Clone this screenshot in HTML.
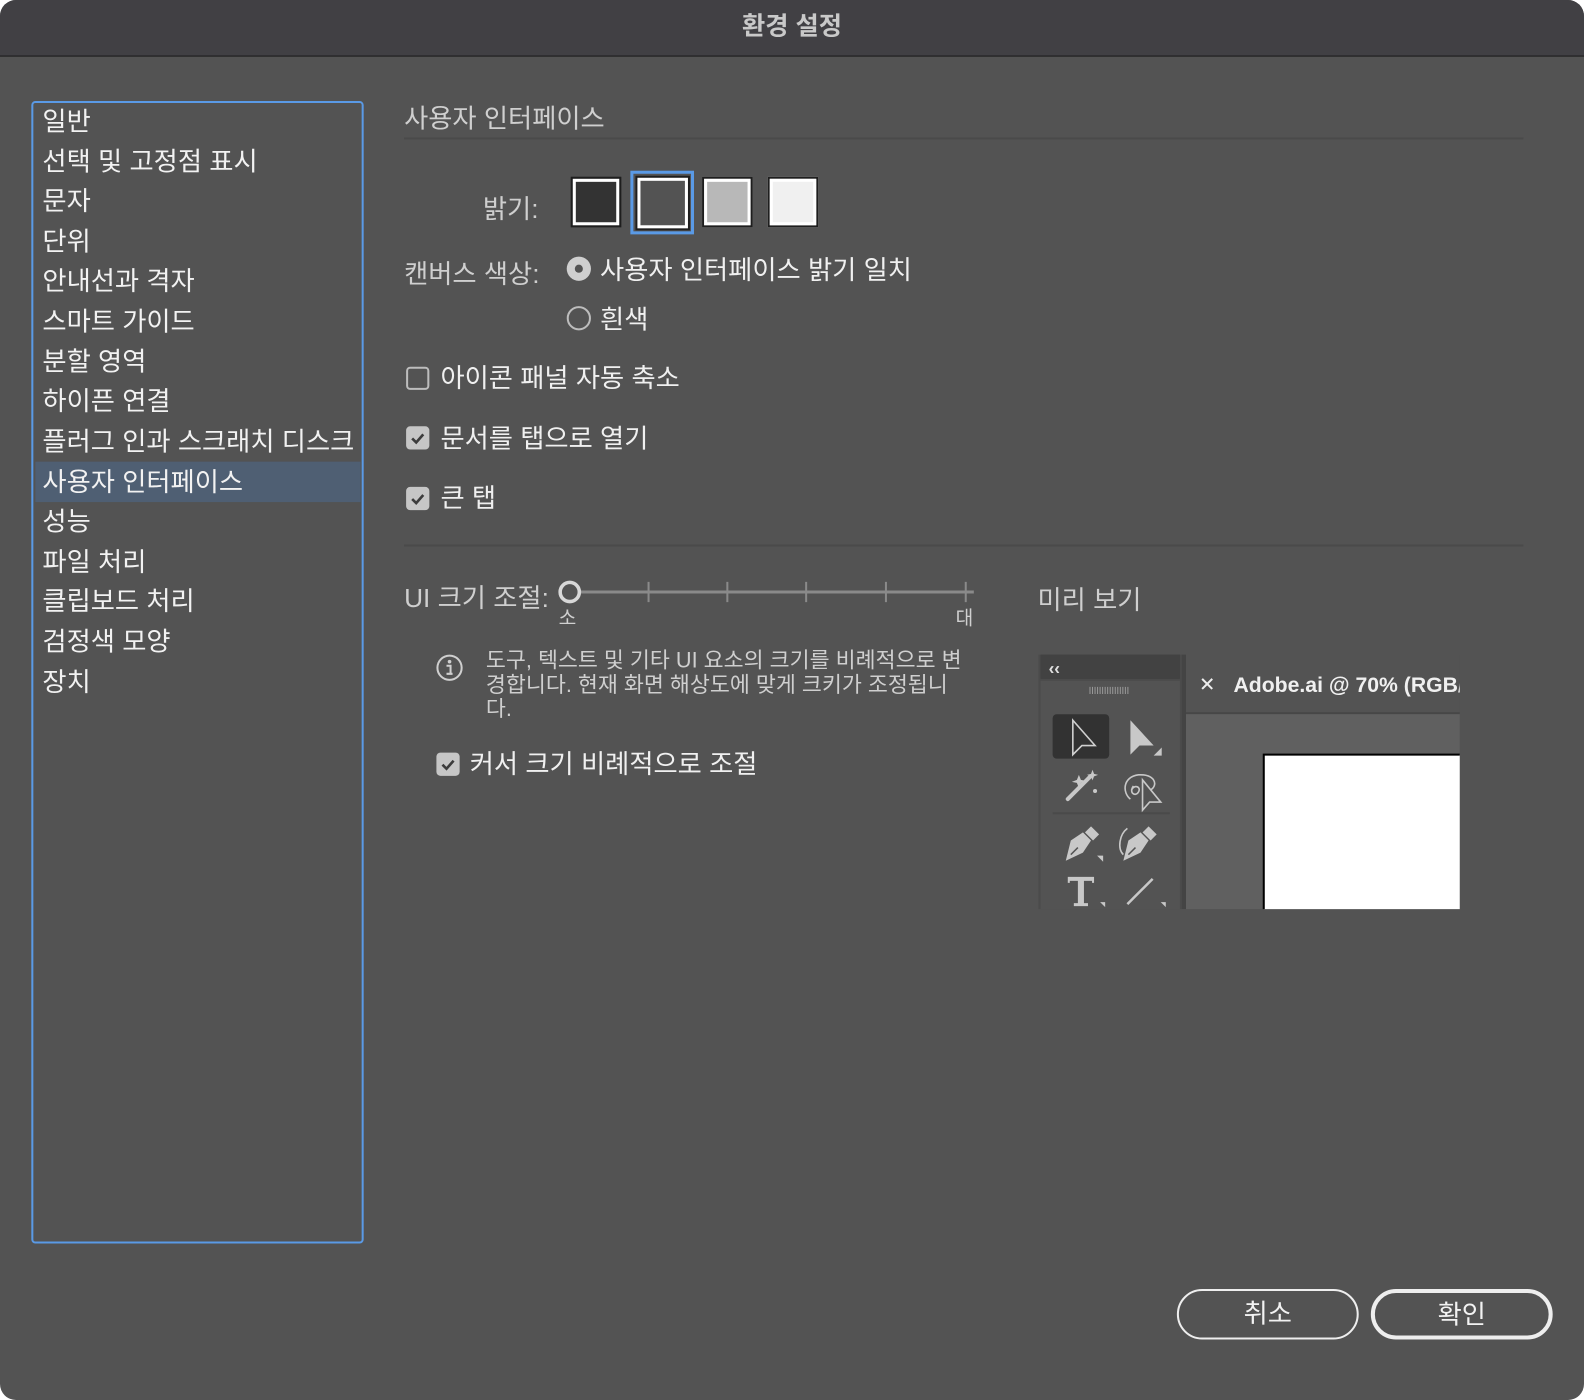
<!DOCTYPE html>
<html><head><meta charset="utf-8">
<style>
*{margin:0;padding:0;box-sizing:border-box}
body{width:1584px;height:1400px;background:#fff;position:relative;overflow:hidden;font-family:"Liberation Sans","Noto Sans CJK KR",sans-serif}
#win{position:absolute;left:0;top:0;width:1584px;height:1400px;background:#535353;border-radius:16px;overflow:hidden}
#c{position:absolute;left:0;top:0;width:1568px;height:1386px;transform:scale(1.0102);transform-origin:0 0}
#title{position:absolute;left:0;top:0;width:1568px;height:56px;background:#414044;border-bottom:1px solid #1a1a1a;text-align:center;color:#c9c9c9;font-size:25px;font-weight:bold;line-height:52px}
.a{position:absolute;white-space:nowrap}
#side{position:absolute;left:31px;top:100px;width:329px;height:1131px;border:2px solid #5a9ae6;border-radius:4px}
.it{position:absolute;left:9px;color:#f2f2f2;font-size:26px;line-height:40px;height:40px;white-space:nowrap}
.sel{left:2px;width:322px;background:#4f5f73;padding-left:7px}
.lbl{color:#cfcfcf;font-size:26px}
.txt{color:#f0f0f0;font-size:26px}
.cb{position:absolute;width:23px;height:23px;border-radius:4px;background:#c6c6c6}
.cb.off{background:none;border:2px solid #bdbdbd}
.sw{position:absolute;top:175px;width:50px;height:50px;border:2px solid #1e1e1e}
.sw i{position:absolute;inset:0;border:3px solid #fff}
.btn{position:absolute;top:1276px;height:50px;border-radius:25px;border:2px solid #eee;color:#f2f2f2;font-size:26px;text-align:center;line-height:44px}
.hr{position:absolute;left:400px;width:1108px;height:2px;background:#4a4a4a}
</style></head><body>
<div id="win"><div id="c">
<div id="title">환경 설정</div>
<div id="side">
<div class="it" style="top:-2px">일반</div>
<div class="it" style="top:38px">선택 및 고정점 표시</div>
<div class="it" style="top:77px">문자</div>
<div class="it" style="top:117px">단위</div>
<div class="it" style="top:156px">안내선과 격자</div>
<div class="it" style="top:196px">스마트 가이드</div>
<div class="it" style="top:236px">분할 영역</div>
<div class="it" style="top:275px">하이픈 연결</div>
<div class="it" style="top:315px">플러그 인과 스크래치 디스크</div>
<div class="it sel" style="top:355px">사용자 인터페이스</div>
<div class="it" style="top:394px">성능</div>
<div class="it" style="top:434px">파일 처리</div>
<div class="it" style="top:473px">클립보드 처리</div>
<div class="it" style="top:513px">검정색 모양</div>
<div class="it" style="top:553px">장치</div>
</div>

<div class="a lbl" style="left:400px;top:97px">사용자 인터페이스</div>
<div class="hr" style="top:136px"></div>

<div class="a lbl" style="left:478px;top:187px">밝기:</div>
<div class="sw" style="left:565px;background:#333"><i></i></div>
<div style="position:absolute;left:624px;top:169px;width:63px;height:63px;border:3px solid #5a9ae6"></div>
<div class="sw" style="left:629px;top:174px;width:54px;height:54px;background:#535353"><i style="border-width:3px"></i></div>
<div class="sw" style="left:695px;background:#b8b8b8"><i></i></div>
<div class="sw" style="left:760px;background:#f0f0f0"><i></i></div>

<div class="a lbl" style="left:400px;top:251px">캔버스 색상:</div>
<div style="position:absolute;left:561px;top:254px;width:24px;height:24px;border-radius:50%;background:#cfcfcf"><div style="position:absolute;left:8px;top:8px;width:8px;height:8px;border-radius:50%;background:#535353"></div></div>
<div class="a txt" style="left:594px;top:247px">사용자 인터페이스 밝기 일치</div>
<div style="position:absolute;left:561px;top:303px;width:24px;height:24px;border-radius:50%;border:2px solid #bdbdbd"></div>
<div class="a txt" style="left:594px;top:296px">흰색</div>

<div class="cb off" style="left:402px;top:363px"></div>
<div class="a txt" style="left:436px;top:354px">아이콘 패널 자동 축소</div>
<div class="cb" style="left:402px;top:422px"><svg width="23" height="23"><path d="M6 12l4 4 7-8" stroke="#3c3c3c" stroke-width="2.6" fill="none"/></svg></div>
<div class="a txt" style="left:436px;top:414px">문서를 탭으로 열기</div>
<div class="cb" style="left:402px;top:482px"><svg width="23" height="23"><path d="M6 12l4 4 7-8" stroke="#3c3c3c" stroke-width="2.6" fill="none"/></svg></div>
<div class="a txt" style="left:436px;top:473px">큰 탭</div>

<div class="hr" style="top:539px"></div>

<div class="a lbl" style="left:400px;top:572px">UI 크기 조절:</div>
<svg class="a" style="left:550px;top:572px" width="420" height="30">
<line x1="22" y1="14" x2="414" y2="14" stroke="#8a8a8a" stroke-width="3"/>
<g stroke="#8a8a8a" stroke-width="2"><line x1="92" y1="4" x2="92" y2="24"/><line x1="170" y1="4" x2="170" y2="24"/><line x1="248" y1="4" x2="248" y2="24"/><line x1="327" y1="4" x2="327" y2="24"/><line x1="406" y1="4" x2="406" y2="24"/></g>
<circle cx="14" cy="14" r="9.5" fill="#535353" stroke="#d8d8d8" stroke-width="3.5"/>
</svg>
<div class="a" style="left:553px;top:597px;color:#d0d0d0;font-size:19px">소</div>
<div class="a" style="left:946px;top:597px;color:#d0d0d0;font-size:19px">대</div>
<div class="a lbl" style="left:1027px;top:574px">미리 보기</div>

<svg class="a" style="left:431px;top:646px" width="30" height="30"><circle cx="14" cy="15" r="12" fill="none" stroke="#cfcfcf" stroke-width="2"/><circle cx="14" cy="9" r="1.8" fill="#cfcfcf"/><path d="M11 13h4v8M11 21h6" stroke="#cfcfcf" stroke-width="2" fill="none"/></svg>
<div class="a" style="left:481px;top:642px;color:#cfcfcf;font-size:21.5px;line-height:24px">도구, 텍스트 및 기타 UI 요소의 크기를 비례적으로 변<br>경합니다. 현재 화면 해상도에 맞게 크키가 조정됩니<br>다.</div>

<div class="cb" style="left:432px;top:745px"><svg width="23" height="23"><path d="M6 12l4 4 7-8" stroke="#3c3c3c" stroke-width="2.6" fill="none"/></svg></div>
<div class="a txt" style="left:465px;top:736px">커서 크기 비례적으로 조절</div>

<svg class="a" style="left:1020px;top:640px" width="425" height="260">
<rect x="8" y="8" width="142" height="252" fill="#4b4b4b"/>
<rect x="10" y="8" width="138" height="24" fill="#424242"/>
<rect x="10" y="34" width="138" height="226" fill="#535353"/>
<text x="18" y="27" fill="#e0e0e0" font-size="17" font-family="Liberation Sans" font-weight="bold">‹‹</text>
<g stroke="#9a9a9a" stroke-width="1"><path d="M59 40v7M61.5 40v7M64 40v7M66.5 40v7M69 40v7M71.5 40v7M74 40v7M76.5 40v7M79 40v7M81.5 40v7M84 40v7M86.5 40v7M89 40v7M91.5 40v7M94 40v7M96.5 40v7"/></g>
<rect x="22" y="67" width="56" height="44" rx="4" fill="#323232"/>
<path d="M42 73v34l9-9h13z" fill="none" stroke="#d0d0d0" stroke-width="1.6"/>
<path d="M99 73v34l9-9h14z" fill="#c8c8c8"/>
<path d="M130 100v8h-8z" fill="#c8c8c8"/>
<path d="M37 151l22-22" stroke="#c8c8c8" stroke-width="4" stroke-linecap="round"/>
<path d="M46 132l2-5 2 5 5 1-5 2-2 5-2-5-5-1zM60 126l1.5-4 1.5 4 4 1-4 1.5-1.5 4-1.5-4-4-1.5z" fill="#c8c8c8"/>
<circle cx="64" cy="143" r="2" fill="#c8c8c8"/>
<path d="M99 151c-8-6-8-22 8-24 16-1 20 10 12 15M100 142c3-6 10-3 7 2s-10 1-5-6" fill="none" stroke="#c8c8c8" stroke-width="1.6"/>
<path d="M111 132v30l7-8h11z" fill="none" stroke="#c8c8c8" stroke-width="1.6"/>
<line x1="22" y1="165" x2="138" y2="165" stroke="#4a4a4a" stroke-width="2"/>
<path d="M35 212l5-20 12-8 8 8-8 12zM54 184l6-6 8 8-6 6z" fill="#c8c8c8"/>
<path d="M40 206l7-7" stroke="#535353" stroke-width="1.5"/>
<path d="M72 213v-6h-6z" fill="#c8c8c8"/>
<path d="M92 212l5-20 12-8 8 8-8 12zM111 184l6-6 8 8-6 6z" fill="#c8c8c8"/>
<path d="M97 206l7-7" stroke="#535353" stroke-width="1.5"/>
<path d="M96 180c-8 6-10 20-4 26" fill="none" stroke="#c8c8c8" stroke-width="1.6"/>
<path d="M37 228h26v6h-2v-2h-8v22h4v3h-14v-3h4v-22h-8v2h-2z" fill="#c8c8c8"/>
<path d="M74 258v-5h-5z" fill="#c8c8c8"/>
<path d="M96 255l25-25" stroke="#c8c8c8" stroke-width="2.5"/>
<path d="M134 258v-5h-5z" fill="#c8c8c8"/>
<rect x="150" y="8" width="4" height="252" fill="#444"/>
<rect x="154" y="8" width="276" height="58" fill="#535353"/>
<rect x="154" y="65" width="276" height="2" fill="#474747"/>
<rect x="154" y="67" width="276" height="193" fill="#606060"/>
<path d="M170 32l10 10M180 32l-10 10" stroke="#eee" stroke-width="2"/>
<text x="201" y="45" fill="#f0f0f0" font-size="21" font-family="Liberation Sans" font-weight="bold">Adobe.ai @ 70% (RGB/</text>
<rect x="231" y="107" width="210" height="160" fill="#fff" stroke="#000" stroke-width="2"/>
</svg>

<div class="btn" style="left:1165px;width:180px;border-width:2px">취소</div>
<div class="btn" style="left:1357px;width:180px;border-width:4px;line-height:42px">확인</div>
</div></div>
</body></html>
